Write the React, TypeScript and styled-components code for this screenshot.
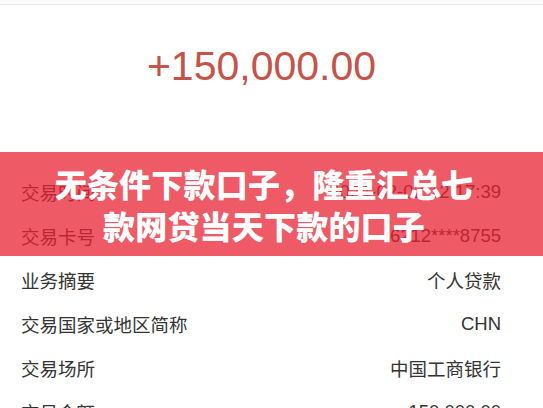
import React from "react";
import styled, { createGlobalStyle } from "styled-components";

const GlobalStyle = createGlobalStyle`
  html, body {
    margin: 0;
    padding: 0;
    background: #ffffff;
    overflow: hidden;
  }
  body {
    font-family: "Liberation Sans", "Noto Sans CJK SC", sans-serif;
  }
`;

const Page = styled.div`
  position: relative;
  width: 543px;
  height: 408px;
  overflow: hidden;
  background: #ffffff;
`;

const TopBar = styled.div`
  height: 4px;
  border-bottom: 1px solid #ececec;
  background: #fbfbfb;
`;

const AmountSection = styled.div`
  display: flex;
  justify-content: center;
  padding: 41px 20px 82.5px 0;
`;

const Amount = styled.div`
  font-family: "Liberation Sans", sans-serif;
  font-size: 41px;
  line-height: 41px;
  color: #c4544a;
`;

const List = styled.div`
  display: flex;
  flex-direction: column;
`;

const Row = styled.div`
  display: flex;
  align-items: center;
  justify-content: space-between;
  height: 44px;
  padding: 0 42px 0 21px;
  font-family: "Liberation Sans", "Noto Sans CJK SC", sans-serif;
  font-size: 18.5px;
  color: #333333;
`;

const Label = styled.span``;
const Value = styled.span``;

const Banner = styled.div`
  position: absolute;
  left: 0;
  right: 0;
  top: 152px;
  height: 104px;
  background: rgba(232, 35, 51, 0.75);
  display: flex;
  align-items: center;
  justify-content: center;
  padding-right: 15px;
  box-sizing: border-box;
`;

const Headline = styled.div`
  font-family: "Noto Sans CJK SC", sans-serif;
  font-weight: 900;
  font-size: 32px;
  line-height: 42px;
  color: #ffffff;
  text-align: center;
  letter-spacing: 0.2px;
`;

const rows: [string, string][] = [
  ["交易时间", "2024-02-02 12:17:39"],
  ["交易卡号", "6212****8755"],
  ["业务摘要", "个人贷款"],
  ["交易国家或地区简称", "CHN"],
  ["交易场所", "中国工商银行"],
  ["交易金额", "150,000.00"],
];

export default function App() {
  return (
    <>
      <GlobalStyle />
      <Page>
        <TopBar />
        <AmountSection>
          <Amount>+150,000.00</Amount>
        </AmountSection>
        <List>
          {rows.map(([label, value]) => (
            <Row key={label}>
              <Label>{label}</Label>
              <Value>{value}</Value>
            </Row>
          ))}
        </List>
        <Banner>
          <Headline>
            无条件下款口子，隆重汇总七
            <br />
            款网贷当天下款的口子
          </Headline>
        </Banner>
      </Page>
    </>
  );
}
